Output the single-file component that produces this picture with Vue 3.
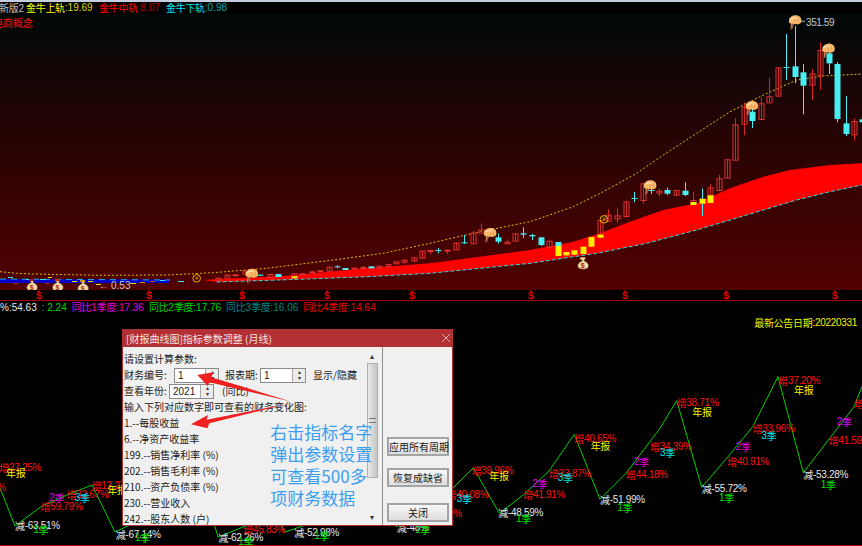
<script setup>
const segs = (s) =>
  s.split(/([\u3400-\u9fff]+)/).filter(Boolean).map((t) => ({ t, cn: /[\u3400-\u9fff]/.test(t) }))

const up = (x, y) => [430 + x / 3, y / 3]
const lf = (x, y) => [x / 3, 200 + y / 3]
const pts = (a) => a.map((p) => p.map((n) => n.toFixed(1)).join(',')).join(' ')

const avgLine = pts([
  lf(0, 215), lf(50, 220), lf(100, 222), lf(300, 226), lf(500, 225), lf(640, 218), lf(800, 205),
  lf(1000, 180), lf(1150, 160), lf(1290, 130),
  up(150, 695), up(300, 665), up(430, 620), up(520, 575), up(620, 520), up(700, 465), up(800, 400),
  up(900, 335), up(1000, 285), up(1100, 240), up(1180, 228), up(1296, 222)
])
const bandTop = [
  lf(610, 240), lf(850, 228), lf(1100, 205), lf(1290, 190),
  up(150, 770), up(300, 750), up(430, 725), up(510, 700), up(600, 665), up(700, 630), up(800, 610),
  up(900, 565), up(1000, 530), up(1080, 510), up(1200, 495), up(1296, 490)
]
const bandBottom = [
  lf(650, 246), lf(900, 238), lf(1100, 230), lf(1290, 220),
  up(150, 805), up(300, 790), up(500, 760), up(650, 730), up(800, 690), up(900, 660), up(1000, 630),
  up(1100, 600), up(1200, 575), up(1296, 555)
]
const band = pts([...bandTop, ...bandBottom.slice().reverse()])
const bandEdge = pts(bandBottom)

const mk = (x, h, t, b, l, kind) => ({
  x: Math.round(430 + x / 3) + 0.5, h: h / 3, t: t / 3, b: b / 3, l: l / 3, kind
})
const small = (x, y, h, kind, hi = 0, lo = 0) => {
  const cx = Math.round(x / 3) + 0.5
  const cy = 200 + y / 3
  return { x: cx, h: cy - hi, t: cy, b: cy + h, l: cy + h + lo, kind }
}
const candles = [
  mk(0, 750, 750, 753, 762, 'r'), mk(25, 744, 750, 752, 760, 'c'), mk(52, 748, 749, 752, 762, 'r'),
  mk(78, 728, 728, 748, 748, 'r'), mk(103, 705, 727, 730, 732, 'c'), mk(129, 692, 698, 730, 730, 'r'),
  mk(153, 670, 688, 698, 698, 'r'), mk(205, 700, 712, 725, 731, 'c'), mk(230, 718, 725, 730, 732, 'r'),
  mk(255, 700, 700, 722, 722, 'r'), mk(280, 682, 700, 704, 714, 'c'), mk(306, 702, 705, 709, 720, 'c'),
  mk(333, 712, 712, 735, 738, 'c'), mk(357, 722, 722, 740, 744, 'r'), mk(383, 726, 726, 738, 738, 'c'),
  mk(383, 738, 738, 768, 768, 'y'), mk(408, 756, 756, 766, 766, 'y'), mk(433, 751, 751, 764, 764, 'y'),
  mk(459, 740, 740, 762, 762, 'y'), mk(484, 711, 711, 740, 740, 'y'), mk(510, 660, 660, 704, 704, 'r'),
  mk(510, 704, 704, 713, 713, 'y'), mk(535, 628, 644, 662, 662, 'r'), mk(561, 625, 646, 655, 668, 'r'),
  mk(588, 604, 604, 648, 652, 'r'), mk(612, 576, 594, 597, 607, 'c'), mk(638, 548, 550, 600, 612, 'r'),
  mk(662, 560, 570, 573, 582, 'c'), mk(688, 565, 572, 578, 588, 'r'), mk(712, 562, 570, 581, 585, 'c'),
  mk(738, 570, 570, 584, 588, 'r'), mk(764, 547, 572, 585, 588, 'c'), mk(789, 576, 600, 606, 622, 'r'),
  mk(789, 606, 606, 615, 615, 'y'), mk(815, 565, 596, 611, 648, 'cy'), mk(840, 553, 562, 586, 586, 'r'),
  mk(840, 586, 586, 609, 609, 'y'), mk(866, 525, 535, 570, 570, 'r'), mk(891, 478, 478, 533, 533, 'r'),
  mk(915, 355, 373, 479, 479, 'r'), mk(942, 307, 320, 371, 405, 'r'), mk(967, 320, 335, 363, 384, 'c'),
  mk(992, 292, 310, 357, 357, 'r'), mk(1018, 234, 289, 307, 307, 'r'), mk(1043, 202, 202, 287, 287, 'r'),
  mk(1069, 102, 201, 203, 240, 'c'), mk(1094, 78, 199, 231, 250, 'c'), mk(1120, 192, 217, 257, 343, 'c'),
  mk(1146, 207, 220, 254, 300, 'r'), mk(1170, 127, 150, 226, 270, 'r'), mk(1196, 130, 160, 190, 222, 'c'),
  mk(1221, 186, 192, 357, 367, 'c'), mk(1247, 288, 370, 402, 408, 'c'), mk(1273, 355, 363, 403, 422, 'r'),
  mk(1296, 358, 358, 367, 367, 'c'),
  small(655, 233, 2, 'r'), small(680, 224, 3, 'r'), small(705, 223, 1, 'r'), small(735, 212, 3, 'r'),
  small(780, 224, 1, 'c'), small(810, 222, 3, 'r'), small(835, 222, 3, 'c'), small(882, 220, 4, 'r'),
  small(882, 229, 2, 'y'), small(905, 220, 1, 'r', 0, 1), small(935, 214, 1, 'r'), small(960, 211, 1, 'r'),
  small(987, 200, 4, 'r'), small(1010, 199, 1, 'c', 1, 1), small(1035, 204, 2, 'c'), small(1063, 203, 1, 'r'),
  small(1088, 201, 1, 'r', 1, 1), small(1112, 199, 2, 'c'), small(1137, 197, 2, 'r'), small(1163, 192, 2, 'r'),
  small(1188, 184, 2, 'r'), small(1213, 179, 2, 'r', 0, 2), small(1242, 172, 3, 'r', 0, 2), small(1266, 152, 7, 'r')
]

const hands = [up(1095, 65), up(1195, 150), up(965, 322), up(660, 560), up(180, 703), lf(755, 225)]
const coins = [up(522, 658), lf(590, 235)]
const bags = [
  { p: up(458, 790), top: '#f0d890' }, { p: lf(95, 255), top: '#a01030' },
  { p: lf(172, 255), top: '#d82010' }, { p: lf(248, 258), top: '#d0a000' }
]
const dollars = [39, 149, 242, 327, 412, 531, 625, 726, 835]

const blueDashes = [
  [8, 277, 5, '#40e0f0'], [26, 279, 6, '#40e0f0'], [40, 279, 6, '#40e0f0'], [48, 277, 4, '#e8c800'],
  [14, 283, 4, '#d02020'], [45, 283, 4, '#d02020'], [72, 281, 5, '#e8e000'], [88, 281, 5, '#e8e000'],
  [96, 284, 5, '#e8e000'], [130, 283, 6, '#e8e000'], [140, 282, 5, '#e89000'], [150, 281, 5, '#d04040'],
  [160, 280, 5, '#40e0f0'], [178, 281, 6, '#40e0f0']
]

const G = '#00e000', RD = '#ff1010', Y = '#f8f000', C = '#00e0e8', M = '#e000e0', W = '#e8e8e8'
const R = (x, y, t, c) => ({ x: 450 + x / 3, y: 370 + y / 3, t, c })
const L = (x, y, t, c) => ({ x: x / 3, y: 420 + y / 3, t, c })
const B = (x, y, t, c) => ({ x: 200 + x / 3, y: 500 + y / 3, t, c })
const labels = [
  L(-2, 142, '增27.25%', RD), L(18, 157, '年报', Y), L(-8, 200, '%', RD),
  L(122, 258, '增59.79%', RD), L(148, 232, '2季', M), L(200, 222, '增32.67%', RD), L(224, 230, '3季', C),
  L(275, 195, '增12.27%', RD), L(322, 208, '年报', Y), L(45, 315, '减-63.51%', W), L(100, 328, '1季', G),
  L(347, 342, '减-67.14%', W), L(405, 352, '1季', G),
  B(55, 112, '减-62.26%', W), B(115, 122, '1季', G), B(130, 88, '增45.83%', RD),
  B(283, 95, '减-52.98%', W), B(343, 105, '1季', G), B(590, 82, '减-48%', W), B(645, 88, '1季', G),
  R(-10, 372, '增40.08%', RD), R(20, 385, '3季', C), R(-51, 428, '增38%', RD),
  R(65, 300, '增39.96%', RD), R(118, 316, '年报', Y), R(145, 427, '减-48.59%', W), R(198, 445, '1季', G),
  R(247, 340, '2季', M), R(220, 372, '增41.91%', RD), R(297, 308, '增33.87%', RD), R(323, 320, '3季', C),
  R(373, 203, '增40.65%', RD), R(422, 224, '年报', Y), R(450, 388, '减-51.99%', W), R(502, 410, '1季', G),
  R(528, 313, '增44.18%', RD), R(552, 274, '2季', M), R(600, 229, '增34.39%', RD), R(630, 246, '3季', C),
  R(680, 97, '增38.71%', RD), R(727, 122, '年报', Y), R(755, 353, '减-55.72%', W), R(807, 381, '1季', G),
  R(832, 272, '增40.91%', RD), R(857, 228, '2季', M), R(908, 173, '增33.96%', RD), R(934, 196, '3季', C),
  R(985, 29, '增37.20%', RD), R(1032, 58, '年报', Y), R(1060, 311, '减-53.28%', W), R(1112, 343, '1季', G),
  R(1136, 210, '增41.59%', RD), R(1160, 153, '2季', M), R(1212, 100, '增', RD)
]
const zigzag = pts([
  [0, 488], [15, 526], [42, 506], [67, 495], [92, 485], [115, 532], [140, 520], [213, 520], [218, 537],
  [243, 527], [275, 515], [285, 532], [320, 520], [390, 520], [397, 527], [420, 500], [453, 488],
  ...[[70, 293], [148, 430], [220, 375], [297, 303], [373, 193], [450, 388], [528, 310], [630, 175],
    [680, 92], [755, 352], [830, 265], [908, 170], [984, 20], [1060, 308], [1135, 210], [1212, 110],
    [1236, 50]].map(([x, y]) => [450 + x / 3, 370 + y / 3])
])

const header = [
  { t: '新版2', c: '#c0c0c0', d: '#c0c0c0', cls: 'h0' },
  { t: '金牛上轨', v: ':19.69', c: '#ffff00', d: '#d8d800', cls: 'h1' },
  { t: '金牛中轨', v: ':8.07', c: '#ff0000', d: '#b80000', cls: 'h2' },
  { t: '金牛下轨', v: ':0.98', c: '#00e8f0', d: '#00a8b0', cls: 'h3' }
]
const info = [
  { t: '%:54.63', c: '#e8e8e8' }, { t: ': 2.24', c: '#00d800' }, { t: '同比1季度:17.36', c: '#e000e0' },
  { t: '同比2季度:17.76', c: '#00d800' }, { t: '同比3季度:16.06', c: '#008888' }, { t: '同比4季度:14.64', c: '#f00000' }
]
const list = ['1.--每股收益', '6.--净资产收益率', '199.--销售净利率 (%)', '202.--销售毛利率 (%)', '210.--资产负债率 (%)', '230.--营业收入', '242.--股东人数 (户)']
const blue = [['右击指标名字', 318], ['弹出参数设置', 385], ['可查看500多', 450], ['项财务数据', 518]]
</script>

<template>
  <div class="screen">
    <div class="topline"></div>
    <div class="header">
      <span v-for="h in header" :key="h.t" :class="['hitem', h.cls]">
        <span :style="{ color: h.c }"><span v-for="s in segs(h.t)" :key="s.t" :class="s.cn ? 'cn' : 'la'">{{ s.t }}</span></span>
        <span v-if="h.v" class="la" :style="{ color: h.d }">{{ h.v }}</span>
      </span>
    </div>

    <svg class="chart" width="862" height="276" viewBox="0 14 862 276">
      <defs>
        <symbol id="hand" viewBox="0 0 14 16" overflow="visible">
          <path d="M1 5 C2 1 7 0 10 1 C13 2 14 5 13 8 C11 10 8 10 6 9 L4 14 L2.5 15 L3 9 L1 8 Z" fill="#f8b868" />
          <path d="M2 5 C4 3 7 3 9 4" stroke="#fff0d8" fill="none" stroke-width="1" />
          <path d="M4.5 9 L3.6 14.5" stroke="#8a4a3a" stroke-width="1.4" fill="none" />
          <path d="M7 4 L7.5 8 M10 4 L10.5 8" stroke="#d89050" stroke-width=".7" fill="none" />
        </symbol>
      </defs>

      <polyline :points="band" fill="#ff0000" stroke="none" />
      <polygon points="0,279 170,279.5 170,283 0,283" fill="#0000c8" />
      <line x1="0" y1="279" x2="170" y2="280" stroke="#20b0e0" stroke-width="1" stroke-dasharray="6 5" />
      <line v-for="d in blueDashes" :key="d[0] + '-' + d[1]" :x1="d[0]" :y1="d[1] + .5" :x2="d[0] + d[2]" :y2="d[1] + .5" :stroke="d[3]" />
      <polyline :points="bandEdge" fill="none" stroke="#30d8e0" stroke-dasharray="4 2" />
      <polyline :points="avgLine" fill="none" stroke="#d8c000" stroke-dasharray="2 2" />

      <g v-for="(k, i) in candles" :key="i">
        <line :x1="k.x" :x2="k.x" :y1="k.h" :y2="k.l" :stroke="k.kind === 'r' ? '#d02828' : k.kind === 'y' ? '#ffee00' : '#48eef4'" />
        <rect v-if="k.kind === 'r'" :x="k.x - 2.5" :y="k.t + .5" width="5" :height="Math.max(k.b - k.t, 1)" fill="none" stroke="#e03030" />
        <rect v-else :x="k.x - 3" :y="k.t" width="6" :height="Math.max(k.b - k.t, 1)" :fill="k.kind === 'c' ? '#48eef4' : '#ffee00'" />
      </g>

      <use v-for="(h, i) in hands" :key="i" href="#hand" :x="h[0] - 7" :y="h[1] - 7" width="14" height="16" />
      <g v-for="(c, i) in coins" :key="i">
        <circle :cx="c[0]" :cy="c[1]" r="3.8" fill="none" stroke="#d8b800" />
        <text :x="c[0]" :y="c[1]" class="coin">¥</text>
      </g>
      <g v-for="(b, i) in bags" :key="i">
        <path :d="`M${b.p[0] - 2.5} ${b.p[1] - 5} h5 l-1 2.5 c3 1 4.5 3 4.5 5 c0 2.5 -2 3.5 -5.5 3.5 c-3.5 0 -5.5 -1 -5.5 -3.5 c0 -2 1.5 -4 4.5 -5 z`" fill="#f0dca8" stroke="#5a3010" stroke-width=".8" />
        <rect :x="b.p[0] - 2.5" :y="b.p[1] - 6" width="5" height="2" :fill="b.top" />
        <text :x="b.p[0]" :y="b.p[1] + 2.5" class="bag">$</text>
      </g>

      <text x="99" y="285.5" class="note">←</text>
      <text x="111" y="285.5" class="note">0.53</text>
      <text x="806" y="22.5" class="note peak">351.59</text>
      <path d="M799 21 q1.5 -1.5 3 0 t3 0" stroke="#c0c0c0" fill="none" />
      <text x="-7" y="22" class="concept">电商概念</text>
    </svg>

    <svg class="strip" width="862" height="10" viewBox="0 290 862 10">
      <g v-for="x in dollars" :key="x">
        <path :d="`M${x - 1.5} 292 L${x} 290 L${x + 1.5} 292 Z`" fill="#e00000" />
        <text :x="x" y="295.5" class="dollar">$</text>
      </g>
    </svg>

    <div class="info">
      <span v-for="it in info" :key="it.t" :style="{ color: it.c }"><span v-for="s in segs(it.t)" :key="s.t" :class="s.cn ? 'cn' : 'la'">{{ s.t }}</span></span>
    </div>

    <div class="lower">
      <svg width="862" height="233" viewBox="0 313 862 233">
        <polyline :points="zigzag" fill="none" stroke="#00d000" />
        <text v-for="(l, i) in labels" :key="i" :x="l.x" :y="l.y" :fill="l.c" class="lab">
          <tspan v-for="s in segs(l.t)" :key="s.t" :class="s.cn ? 'cn' : 'la'">{{ s.t }}</tspan>
        </text>
        <text x="857" y="322" text-anchor="end" fill="#f0f000" class="lab">
          <tspan class="cn">最新公告日期</tspan><tspan class="la">:20220331</tspan>
        </text>
        <line x1="0" x2="862" y1="545.5" y2="545.5" stroke="#b00000" />
      </svg>

      <div class="dialog">
        <div class="title">
          <span>[财报曲线图]指标参数调整 (月线)</span>
          <svg class="close" width="10" height="10" viewBox="0 0 10 10"><path d="M1 1 L9 9 M9 1 L1 9" stroke="#e8b0b0" stroke-width="1" /></svg>
        </div>
        <div class="body">
          <div class="params">
            <div class="row">请设置计算参数:</div>
            <div class="row">
              <span class="lbl1">财务编号:</span>
              <span class="spin w45"><span class="val">1</span><span class="btns"><i>▴</i><i>▾</i></span></span>
              <span class="lbl2">报表期:</span>
              <span class="spin w46"><span class="val">1</span><span class="btns"><i>▴</i><i>▾</i></span></span>
              <span class="lbl3">显示/隐藏</span>
            </div>
            <div class="row">
              <span class="lbl4">查看年份:</span>
              <span class="spin w45"><span class="val">2021</span><span class="btns"><i>▴</i><i>▾</i></span></span>
              <span class="lbl5">(同比)</span>
            </div>
            <div class="row">输入下列对应数字即可查看的财务变化图:</div>
            <div v-for="t in list" :key="t" class="row">{{ t }}</div>
          </div>
          <div class="scroll">
            <span class="arr">▴</span>
            <div class="thumb"><span class="grip"></span></div>
            <span class="arr dn">▾</span>
          </div>
          <div class="side">
            <button class="btn">应用所有周期</button>
            <button class="btn">恢复成缺省</button>
            <button class="btn last">关闭</button>
          </div>
        </div>
        <svg class="overlay" width="340" height="205" viewBox="0 0 1020 615">
          <polygon points="232,150 280,142 274,157 515,230 268,172 263,183" fill="#f02020" />
          <polygon points="213,298 264,270 260,284 515,234 268,295 262,310" fill="#f02020" />
          <text v-for="b in blue" :key="b[0]" x="451" :y="b[1]" class="bluetxt">{{ b[0] }}</text>
        </svg>
      </div>
    </div>
  </div>
</template>

<style scoped>
.screen {
  width: 862px;
  height: 546px;
  display: flex;
  flex-direction: column;
  background: #000;
  overflow: hidden;
  font-family: "Noto Sans CJK SC", sans-serif;
}
.topline { height: 2px; background: #c4cede; flex: none; }
.header { height: 12px; flex: none; display: flex; align-items: center; font-size: 10px; line-height: 12px; white-space: nowrap; }
.hitem { display: inline-flex; }
.h0 { width: 27px; margin-left: -1px; }
.h1 { width: 73px; }
.h2 { width: 67px; }
.cn { font-family: "Noto Sans CJK SC", sans-serif; font-size: 10px; letter-spacing: -.3px; }
.la { font-family: "Liberation Sans", sans-serif; font-size: 10px; }
.chart {
  display: block;
  flex: none;
  background: linear-gradient(#000808, #1c0505 30%, #2e0303 55%, #520000);
}
.strip { display: block; flex: none; }
.info {
  flex: none;
  height: 13px;
  box-sizing: border-box;
  padding-bottom: 1px;
  border-top: 1px solid #a80000;
  display: flex;
  gap: 5px;
  align-items: center;
  white-space: nowrap;
  font-size: 10px;
}
.lower { position: relative; flex: 1; }
.lower > svg { display: block; }
.lab { font-size: 10px; dominant-baseline: central; }
.lab .la { letter-spacing: -.3px; }
.coin { font-size: 6px; fill: #d8b800; text-anchor: middle; dominant-baseline: central; font-family: "Liberation Sans", sans-serif; }
.bag { font-size: 7px; fill: #b02010; text-anchor: middle; dominant-baseline: central; font-family: "Liberation Sans", sans-serif; font-weight: 700; }
.note { font-family: "Liberation Sans", sans-serif; font-size: 10px; fill: #c8c8c8; dominant-baseline: central; }
.peak { letter-spacing: -.4px; }
.concept { font-family: "Noto Sans CJK SC", sans-serif; font-size: 10px; fill: #ff1010; dominant-baseline: central; }
.dollar { font-family: "Liberation Mono", monospace; font-size: 11px; font-weight: 700; fill: #e00000; text-anchor: middle; dominant-baseline: central; }

.dialog {
  position: absolute;
  left: 122px;
  top: 16px;
  width: 331px;
  height: 197px;
  background: #f0f0f0;
  border: 1px solid #b03030;
  box-sizing: border-box;
  display: flex;
  flex-direction: column;
  color: #1a1a1a;
  font-size: 10px;
}
.title {
  height: 17px;
  flex: none;
  background: #b23034;
  color: #f2e4e4;
  display: flex;
  align-items: center;
  justify-content: space-between;
  padding: 0 1px 1px 3px;
  box-sizing: border-box;
  white-space: nowrap;
}
.body { flex: 1; display: flex; min-height: 0; }
.params { width: 243px; flex: none; padding: 4px 0 0 1px; box-sizing: border-box; overflow: hidden; }
.row { height: 16px; line-height: 16px; display: flex; align-items: center; white-space: nowrap; }
.lbl1 { width: 50px; }
.lbl2 { margin-left: 6px; width: 35px; }
.lbl3 { margin-left: 7px; }
.lbl4 { width: 45px; }
.lbl5 { margin-left: 8px; }
.spin { display: inline-flex; height: 15px; background: #fff; border: 1px solid #8a8a8a; box-sizing: border-box; font-size: 10px; }
.w45 { width: 45px; }
.w46 { width: 46px; }
.val { flex: 1; padding-left: 3px; line-height: 13px; font-family: "Liberation Sans", sans-serif; }
.btns { width: 12px; display: flex; flex-direction: column; border-left: 1px solid #aaa; background: #ececec; }
.btns i { flex: 1; font-style: normal; font-size: 6px; line-height: 6px; text-align: center; color: #333; }
.scroll { width: 12px; flex: none; margin-top: 2px; display: flex; flex-direction: column; align-items: center; }
.arr { height: 14px; font-size: 8px; line-height: 14px; color: #333; }
.dn { margin-top: 32px; }
.thumb {
  width: 11px;
  height: 115px;
  background: linear-gradient(90deg, #e8e8e8, #c4c4c4);
  border: 1px solid #b0b0b0;
  box-sizing: border-box;
  display: flex;
  align-items: center;
  justify-content: center;
}
.grip { width: 7px; height: 5px; border-top: 1px solid #777; border-bottom: 1px solid #777; box-sizing: border-box; }
.side {
  flex: 1;
  margin-left: 4px;
  border-left: 1px solid #909090;
  display: flex;
  flex-direction: column;
  padding: 90px 4px 0 4px;
  gap: 12px;
}
.btn {
  height: 19px;
  width: 62px;
  padding: 0;
  font: inherit;
  color: #1a1a1a;
  background: linear-gradient(#f8f8f8, #dedede);
  border: 2px solid #a4a4a4;
  box-sizing: border-box;
  white-space: nowrap;
}
.last { margin-top: 4px; }
.overlay { position: absolute; left: -3px; top: -5px; pointer-events: none; }
.bluetxt { font-family: "Noto Sans CJK SC", sans-serif; font-size: 51px; fill: #3d9df0; dominant-baseline: central; }
</style>
